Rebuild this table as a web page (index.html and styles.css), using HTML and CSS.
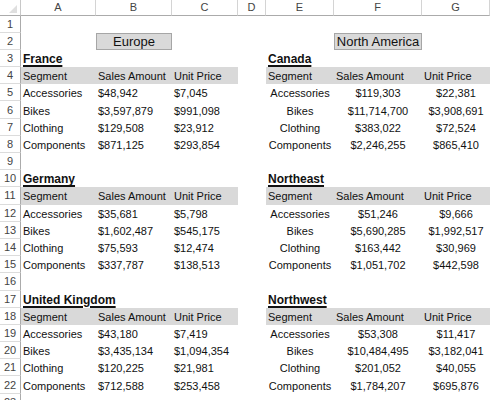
FILE: index.html
```html
<!DOCTYPE html>
<html>
<head>
<meta charset="utf-8">
<link rel="stylesheet" href="styles.css">
</head>
<body>
<div class="sheet">
  <div class="corner"><span class="tri"></span></div>
  <div class="ch">A</div><div class="ch">B</div><div class="ch">C</div><div class="ch">D</div><div class="ch">E</div><div class="ch">F</div><div class="ch">G</div>

  <div class="rh">1</div><div class="c"></div><div class="c"></div><div class="c"></div><div class="c"></div><div class="c"></div><div class="c"></div><div class="c"></div>

  <div class="rh">2</div><div class="c"></div><div class="c btn">Europe</div><div class="c"></div><div class="c"></div><div class="c"></div><div class="c btn">North America</div><div class="c"></div>

  <div class="rh">3</div><div class="c t"><span>France</span></div><div class="c"></div><div class="c"></div><div class="c"></div><div class="c t"><span>Canada</span></div><div class="c"></div><div class="c"></div>

  <div class="rh">4</div><div class="c h">Segment</div><div class="c h">Sales Amount</div><div class="c h">Unit Price</div><div class="c"></div><div class="c h">Segment</div><div class="c h">Sales Amount</div><div class="c h">Unit Price</div>

  <div class="rh">5</div><div class="c">Accessories</div><div class="c">$48,942</div><div class="c">$7,045</div><div class="c"></div><div class="c m">Accessories</div><div class="c m">$119,303</div><div class="c m">$22,381</div>
  <div class="rh">6</div><div class="c">Bikes</div><div class="c">$3,597,879</div><div class="c">$991,098</div><div class="c"></div><div class="c m">Bikes</div><div class="c m">$11,714,700</div><div class="c m">$3,908,691</div>
  <div class="rh">7</div><div class="c">Clothing</div><div class="c">$129,508</div><div class="c">$23,912</div><div class="c"></div><div class="c m">Clothing</div><div class="c m">$383,022</div><div class="c m">$72,524</div>
  <div class="rh">8</div><div class="c">Components</div><div class="c">$871,125</div><div class="c">$293,854</div><div class="c"></div><div class="c m">Components</div><div class="c m">$2,246,255</div><div class="c m">$865,410</div>

  <div class="rh">9</div><div class="c"></div><div class="c"></div><div class="c"></div><div class="c"></div><div class="c"></div><div class="c"></div><div class="c"></div>

  <div class="rh">10</div><div class="c t"><span>Germany</span></div><div class="c"></div><div class="c"></div><div class="c"></div><div class="c t"><span>Northeast</span></div><div class="c"></div><div class="c"></div>

  <div class="rh">11</div><div class="c h">Segment</div><div class="c h">Sales Amount</div><div class="c h">Unit Price</div><div class="c"></div><div class="c h">Segment</div><div class="c h">Sales Amount</div><div class="c h">Unit Price</div>

  <div class="rh">12</div><div class="c">Accessories</div><div class="c">$35,681</div><div class="c">$5,798</div><div class="c"></div><div class="c m">Accessories</div><div class="c m">$51,246</div><div class="c m">$9,666</div>
  <div class="rh">13</div><div class="c">Bikes</div><div class="c">$1,602,487</div><div class="c">$545,175</div><div class="c"></div><div class="c m">Bikes</div><div class="c m">$5,690,285</div><div class="c m">$1,992,517</div>
  <div class="rh">14</div><div class="c">Clothing</div><div class="c">$75,593</div><div class="c">$12,474</div><div class="c"></div><div class="c m">Clothing</div><div class="c m">$163,442</div><div class="c m">$30,969</div>
  <div class="rh">15</div><div class="c">Components</div><div class="c">$337,787</div><div class="c">$138,513</div><div class="c"></div><div class="c m">Components</div><div class="c m">$1,051,702</div><div class="c m">$442,598</div>

  <div class="rh">16</div><div class="c"></div><div class="c"></div><div class="c"></div><div class="c"></div><div class="c"></div><div class="c"></div><div class="c"></div>

  <div class="rh">17</div><div class="c t"><span>United Kingdom</span></div><div class="c"></div><div class="c"></div><div class="c"></div><div class="c t"><span>Northwest</span></div><div class="c"></div><div class="c"></div>

  <div class="rh">18</div><div class="c h">Segment</div><div class="c h">Sales Amount</div><div class="c h">Unit Price</div><div class="c"></div><div class="c h">Segment</div><div class="c h">Sales Amount</div><div class="c h">Unit Price</div>

  <div class="rh">19</div><div class="c">Accessories</div><div class="c">$43,180</div><div class="c">$7,419</div><div class="c"></div><div class="c m">Accessories</div><div class="c m">$53,308</div><div class="c m">$11,417</div>
  <div class="rh">20</div><div class="c">Bikes</div><div class="c">$3,435,134</div><div class="c">$1,094,354</div><div class="c"></div><div class="c m">Bikes</div><div class="c m">$10,484,495</div><div class="c m">$3,182,041</div>
  <div class="rh">21</div><div class="c">Clothing</div><div class="c">$120,225</div><div class="c">$21,981</div><div class="c"></div><div class="c m">Clothing</div><div class="c m">$201,052</div><div class="c m">$40,055</div>
  <div class="rh">22</div><div class="c">Components</div><div class="c">$712,588</div><div class="c">$253,458</div><div class="c"></div><div class="c m">Components</div><div class="c m">$1,784,207</div><div class="c m">$695,876</div>

  <div class="rh">23</div><div class="c"></div><div class="c"></div><div class="c"></div><div class="c"></div><div class="c"></div><div class="c"></div><div class="c"></div>
</div>
</body>
</html>
```

FILE: styles.css
```css
html, body {
  margin: 0;
  padding: 0;
  background: #ffffff;
  overflow: hidden;
}

.sheet {
  display: grid;
  grid-template-columns: 21px 75px 76px 66px 28px 68px 88px 68px;
  grid-template-rows: 15.5px repeat(23, 17.2px);
  width: 490px;
  font-family: "Liberation Sans", Arial, sans-serif;
  font-size: 11px;
  color: #111111;
}

.corner {
  position: relative;
  background: #ffffff;
  border-right: 1px solid #c8c8c8;
  border-bottom: 1px solid #ababab;
  box-sizing: border-box;
}

.tri {
  position: absolute;
  right: 3px;
  bottom: 2px;
  width: 0;
  height: 0;
  border-left: 8px solid transparent;
  border-bottom: 8px solid #dfdfdf;
}

.ch {
  display: flex;
  align-items: center;
  justify-content: center;
  background: #ffffff;
  color: #444444;
  font-size: 11px;
  border-right: 1px solid #d4d4d4;
  border-bottom: 1px solid #ababab;
  box-sizing: border-box;
}

.rh {
  display: flex;
  align-items: center;
  justify-content: center;
  background: #ffffff;
  color: #444444;
  font-size: 11px;
  border-right: 1px solid #ababab;
  border-bottom: 1px solid #dcdcdc;
  box-sizing: border-box;
}

.c {
  display: flex;
  align-items: center;
  padding: 1px 2px 0;
  white-space: nowrap;
  overflow: visible;
  min-width: 0;
  box-sizing: border-box;
}

.m {
  justify-content: center;
}

.h {
  background: #d9d9d9;
}

.t {
  font-weight: bold;
  font-size: 12px;
}

.t span {
  text-decoration: underline;
  text-decoration-thickness: 1.5px;
  text-underline-offset: 1.5px;
}

.btn {
  justify-content: center;
  background: #d9d9d9;
  border: 1px solid #a6a6a6;
  font-size: 13px;
  padding: 0;
}
```
